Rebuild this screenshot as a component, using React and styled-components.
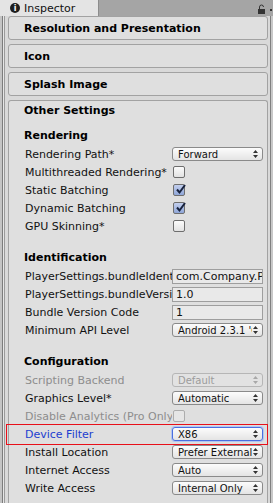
import React from "react"
import styled, { createGlobalStyle } from "styled-components"

const GlobalStyle = createGlobalStyle`
  html, body { margin: 0; padding: 0; background: #d9d9d9; }
  body { font-family: "DejaVu Sans", Verdana, sans-serif; }
`

const Window = styled.div`
  width: 273px;
  height: 503px;
  overflow: hidden;
  display: flex;
  flex-direction: column;
  background: #d9d9d9;
`

const TabBar = styled.div`
  height: 16px;
  flex: none;
  display: flex;
  align-items: stretch;
  background: #a5a5a5;
`

const Tab = styled.div`
  width: 99px;
  display: flex;
  align-items: center;
  gap: 4px;
  padding-left: 10px;
  box-sizing: border-box;
  background: #e4e4e4;
  border-right: 1px solid #8c8c8c;
  font-size: 11px;
  color: #111;
`

const InfoIcon = styled.span`
  width: 10px;
  height: 10px;
  border-radius: 50%;
  background: #1e1e1e;
  color: #fff;
  font: bold 8px "DejaVu Sans", sans-serif;
  display: flex;
  align-items: center;
  justify-content: center;
`

const TabTools = styled.div`
  margin-left: auto;
  display: flex;
  align-items: flex-end;
  gap: 5px;
  padding: 0 1px 2px 0;
`

const MenuDot = styled.span`
  width: 2px;
  height: 2px;
  background: #333;
  margin-bottom: 3px;
`

const Body = styled.div`
  flex: 1;
  display: flex;
  min-height: 0;
`

const LeftEdge = styled.div`
  width: 5px;
  flex: none;
  margin-right: 3px;
  background: linear-gradient(to right, #c4c4c4 0 2px, #7c7c7c 2px 3px, #e6e6e6 3px 4px, #9a9a9a 4px 5px);
`

const Content = styled.div`
  width: 260px;
  flex: none;
  display: flex;
  flex-direction: column;
  gap: 4px;
`

const RightEdge = styled.div`
  width: 3px;
  margin-left: 2px;
  flex: none;
  background: linear-gradient(to right, #7f7f7f 0 1px, #c8c8c8 1px 3px);
`

const Foldout = styled.div`
  box-sizing: border-box;
  border: 1px solid #a2a2a2;
  background: #dfdfdf;
  padding-left: 15px;
  display: flex;
  flex-direction: column;
  border-radius: ${p => p.open ? "3px 3px 0 0" : "3px"};
  ${p => p.open ? "flex: 1; border-bottom: none;" : "height: 24px; justify-content: center;"}
`

const FoldoutTitle = styled.div`
  height: ${p => p.open ? 19 : 22}px;
  display: flex;
  align-items: center;
  font-size: 11px;
  font-weight: bold;
  color: #000;
`

const GroupTitle = styled.div`
  height: 20px;
  display: flex;
  align-items: center;
  font-size: 11px;
  font-weight: bold;
  color: #000;
  margin-top: ${p => p.gap}px;
`

const Row = styled.div`
  position: relative;
  height: 18px;
  display: flex;
  align-items: center;
  padding-left: 1px;
`

const Label = styled.div`
  width: 147px;
  flex: none;
  font-size: 11px;
  white-space: nowrap;
  overflow: hidden;
  color: ${p => p.tone === "disabled" ? "#8d8d8d" : p.tone === "focus" ? "#1c3ed0" : "#111"};
`

const Popup = styled.div`
  width: 91px;
  height: 14px;
  box-sizing: border-box;
  border: 1px solid ${p => p.focus ? "#4a6fe0" : p.disabled ? "#b6b6b6" : "#8a8a8a"};
  box-shadow: ${p => p.focus ? "0 0 0 1px #b3c5f2" : "none"};
  border-radius: 3px;
  background: ${p => p.disabled ? "#e2e2e2" : "linear-gradient(#fcfcfc, #e4e4e4)"};
  display: flex;
  align-items: center;
  padding: 0 4px 0 5px;
  font-size: 10px;
  color: ${p => p.disabled ? "#9c9c9c" : "#111"};
  white-space: nowrap;
  overflow: hidden;
`

const PopupText = styled.span`
  flex: 1;
  min-width: 0;
  overflow: hidden;
`

const Arrows = styled.svg`
  flex: none;
  margin-left: 1px;
`

const TextField = styled.div`
  width: 91px;
  height: 15px;
  box-sizing: border-box;
  border: 1px solid #9e9e9e;
  background: #e9e9e9;
  font-size: 11px;
  color: #111;
  padding-left: 3px;
  display: flex;
  align-items: center;
  white-space: nowrap;
  overflow: hidden;
`

const Check = styled.div`
  width: 12px;
  height: 12px;
  margin-left: 1px;
  box-sizing: border-box;
  border: 1px solid ${p => p.disabled ? "#adadad" : "#6e6e6e"};
  border-radius: 2px;
  background: ${p => p.checked ? "linear-gradient(#c3cfee, #8fa6d8)" : p.disabled ? "#e6e6e6" : "linear-gradient(#fbfbfb, #e2e2e2)"};
  display: flex;
  align-items: center;
  justify-content: center;
  overflow: visible;
`

const Highlight = styled.div`
  position: absolute;
  left: -18px;
  right: -1px;
  top: -1px;
  bottom: -2px;
  border: 1px solid #e8101a;
  pointer-events: none;
`

const Tick = () => (
  <svg width="11" height="11" viewBox="0 0 11 11" style={{ marginTop: -2, marginRight: -2 }}>
    <path d="M2 5.5 L4.5 8.5 L10 1" fill="none" stroke="#17223d" strokeWidth="2" />
  </svg>
)

const Lock = () => (
  <svg width="7" height="10" viewBox="0 0 7 10">
    <path d="M1.5 5 V3 a2 2 0 0 1 4 0" fill="none" stroke="#333" strokeWidth="1" />
    <rect x="0" y="5" width="7" height="5" fill="#333" />
  </svg>
)

const Dropdown = ({ value, disabled, focus }) => (
  <Popup disabled={disabled} focus={focus}>
    <PopupText>{value}</PopupText>
    <Arrows width="5" height="8" viewBox="0 0 5 8">
      <path d="M0 3 L2.5 0 L5 3 Z M0 5 L2.5 8 L5 5 Z" fill={disabled ? "#a8a8a8" : "#333"} />
    </Arrows>
  </Popup>
)

const Field = ({ label, tone, children, highlight }) => (
  <Row>
    <Label tone={tone}>{label}</Label>
    {children}
    {highlight && <Highlight />}
  </Row>
)

export default function App() {
  return (
    <Window>
      <GlobalStyle />
      <TabBar>
        <Tab><InfoIcon>i</InfoIcon>Inspector</Tab>
        <TabTools><Lock /><MenuDot /></TabTools>
      </TabBar>
      <Body>
        <LeftEdge />
        <Content>
          <Foldout><FoldoutTitle>Resolution and Presentation</FoldoutTitle></Foldout>
          <Foldout><FoldoutTitle>Icon</FoldoutTitle></Foldout>
          <Foldout><FoldoutTitle>Splash Image</FoldoutTitle></Foldout>
          <Foldout open>
            <FoldoutTitle open>Other Settings</FoldoutTitle>
            <GroupTitle gap={5}>Rendering</GroupTitle>
            <Field label="Rendering Path*"><Dropdown value="Forward" /></Field>
            <Field label="Multithreaded Rendering*"><Check /></Field>
            <Field label="Static Batching"><Check checked><Tick /></Check></Field>
            <Field label="Dynamic Batching"><Check checked><Tick /></Check></Field>
            <Field label="GPU Skinning*"><Check /></Field>
            <GroupTitle gap={12}>Identification</GroupTitle>
            <Field label="PlayerSettings.bundleIdentifier"><TextField>com.Company.ProductName</TextField></Field>
            <Field label="PlayerSettings.bundleVersion"><TextField>1.0</TextField></Field>
            <Field label="Bundle Version Code"><TextField>1</TextField></Field>
            <Field label="Minimum API Level"><Dropdown value="Android 2.3.1 'Gingerbread'" /></Field>
            <GroupTitle gap={12}>Configuration</GroupTitle>
            <Field label="Scripting Backend" tone="disabled"><Dropdown value="Default" disabled /></Field>
            <Field label="Graphics Level*"><Dropdown value="Automatic" /></Field>
            <Field label="Disable Analytics (Pro Only)" tone="disabled"><Check disabled /></Field>
            <Field label="Device Filter" tone="focus" highlight><Dropdown value="X86" focus /></Field>
            <Field label="Install Location"><Dropdown value="Prefer External" /></Field>
            <Field label="Internet Access"><Dropdown value="Auto" /></Field>
            <Field label="Write Access"><Dropdown value="Internal Only" /></Field>
          </Foldout>
        </Content>
        <RightEdge />
      </Body>
    </Window>
  )
}
